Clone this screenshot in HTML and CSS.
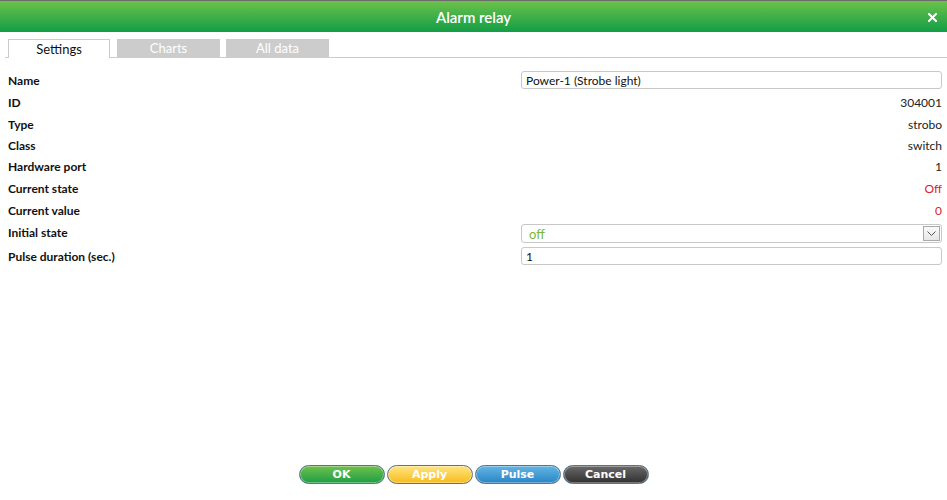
FILE: index.html
```html
<!DOCTYPE html>
<html lang="en">

<head>
    <meta charset="UTF-8">
    <meta name="viewport" content="width=device-width, initial-scale=1.0">
    <title>Alarm relay</title>
    <link rel="stylesheet" href="styles.css">
</head>

<body>
    <div class="dialog">
        <div class="titlebar">
            <span class="title">Alarm relay</span>
            <span class="close">
                <svg width="9" height="9" viewBox="0 0 9 9">
                    <path d="M1 1 L8 8 M8 1 L1 8" stroke="#fff" stroke-width="2" stroke-linecap="square"/>
                </svg>
            </span>
        </div>

        <div class="tabs">
            <div class="tab active">Settings</div>
            <div class="tab charts">Charts</div>
            <div class="tab alldata">All data</div>
        </div>

        <div class="form">
            <div class="row">
                <label>Name</label>
                <div class="field"><input type="text" class="text-input" value="Power-1 (Strobe light)"></div>
            </div>
            <div class="row">
                <label>ID</label>
                <div class="value">304001</div>
            </div>
            <div class="row">
                <label>Type</label>
                <div class="value">strobo</div>
            </div>
            <div class="row compact">
                <label>Class</label>
                <div class="value">switch</div>
            </div>
            <div class="row">
                <label>Hardware port</label>
                <div class="value">1</div>
            </div>
            <div class="row">
                <label>Current state</label>
                <div class="value red">Off</div>
            </div>
            <div class="row">
                <label>Current value</label>
                <div class="value red">0</div>
            </div>
            <div class="row">
                <label>Initial state</label>
                <div class="field field-select">
                    <div class="select">
                        <span class="select-text">off</span>
                        <span class="select-arrow">
                            <svg width="9" height="5" viewBox="0 0 9 5">
                                <path d="M0.5 0.5 L4.5 4.5 L8.5 0.5" fill="none" stroke="#555" stroke-width="1"/>
                            </svg>
                        </span>
                    </div>
                </div>
            </div>
            <div class="row spaced">
                <label>Pulse duration (sec.)</label>
                <div class="field"><input type="text" class="text-input" value="1"></div>
            </div>
        </div>

        <div class="buttons">
            <button class="btn btn-ok">OK</button>
            <button class="btn btn-apply">Apply</button>
            <button class="btn btn-pulse">Pulse</button>
            <button class="btn btn-cancel">Cancel</button>
        </div>
    </div>
</body>

</html>
```

FILE: styles.css
```css
body {
    margin: 0;
    font-family: Lato, "Open Sans", sans-serif;
    background: #fff;
    color: #222;
}

.dialog {
    display: flex;
    flex-direction: column;
    height: 100vh;
}

.titlebar {
    height: 31px;
    border-top: 1px solid #6b6b6b;
    background: linear-gradient(to bottom, #6cc14a, #129e47);
    display: flex;
    align-items: center;
    justify-content: center;
    position: relative;
}

.title {
    color: #fff;
    font-size: 15px;
    font-weight: 600;
}

.close {
    position: absolute;
    right: 10px;
    top: 12px;
    line-height: 0;
}

.tabs {
    display: flex;
    margin: 7px 0 0 5px;
    border-bottom: 1px solid #ccc;
    height: 18px;
}

.tab {
    height: 18px;
    font-size: 13px;
    line-height: 18px;
    text-align: center;
    box-sizing: border-box;
}

.tab.active {
    width: 102px;
    margin-left: 3px;
    background: #fff;
    border: 1px solid #ccc;
    border-bottom: none;
    height: 19px;
    color: #111;
}

.tab.charts {
    width: 103px;
    margin-left: 7px;
    background: #ccc;
    color: #fff;
}

.tab.alldata {
    width: 103px;
    margin-left: 6px;
    background: #ccc;
    color: #fff;
}

.form {
    flex: 1;
    padding: 11px 5px 0 8px;
}

.row {
    display: grid;
    grid-template-columns: 513px 1fr;
    align-items: center;
    height: 22px;
    font-size: 12px;
}

.row.compact {
    height: 20px;
}

.row.spaced {
    margin-top: 2px;
}

label {
    font-weight: bold;
    color: #111;
}

.value {
    text-align: right;
    color: #222;
}

.value.red {
    color: #e0202a;
}

.field-select {
    align-self: start;
    margin-top: 3px;
}

.text-input {
    width: 100%;
    box-sizing: border-box;
    height: 18px;
    border: 1px solid #c8c8c8;
    border-radius: 3px;
    padding: 0 4px;
    font-family: Lato, "Open Sans", sans-serif;
    font-size: 12px;
    color: #111;
    outline: none;
}

.select {
    height: 19px;
    box-sizing: border-box;
    border: 1px solid #c8c8c8;
    border-radius: 3px;
    display: flex;
    align-items: center;
    justify-content: space-between;
    padding: 0 1px 0 7px;
}

.select-text {
    color: #79b838;
    font-size: 13px;
}

.select-arrow {
    width: 17px;
    height: 15px;
    box-sizing: border-box;
    border: 1px solid #a9a9a9;
    background: linear-gradient(to bottom, #fafafa, #e6e6e6);
    display: flex;
    align-items: center;
    justify-content: center;
}

.buttons {
    display: flex;
    justify-content: center;
    gap: 2px;
    padding-bottom: 16px;
}

.btn {
    width: 86px;
    height: 19px;
    border: 1px solid #56748a;
    border-radius: 10px;
    box-shadow: inset 0 0 0 1px rgba(255, 255, 255, 0.35);
    color: #fff;
    font-family: "DejaVu Sans", Verdana, sans-serif;
    font-weight: bold;
    font-size: 11px;
    padding: 0;
    cursor: pointer;
}

.btn-ok {
    background: linear-gradient(to bottom, #70c14b, #1e9e45);
}

.btn-apply {
    background: linear-gradient(to bottom, #ffe582, #f8bb1c);
}

.btn-pulse {
    background: linear-gradient(to bottom, #63b6e4, #2a84c5);
}

.btn-cancel {
    background: linear-gradient(to bottom, #6a6a6a, #303030);
}
```
